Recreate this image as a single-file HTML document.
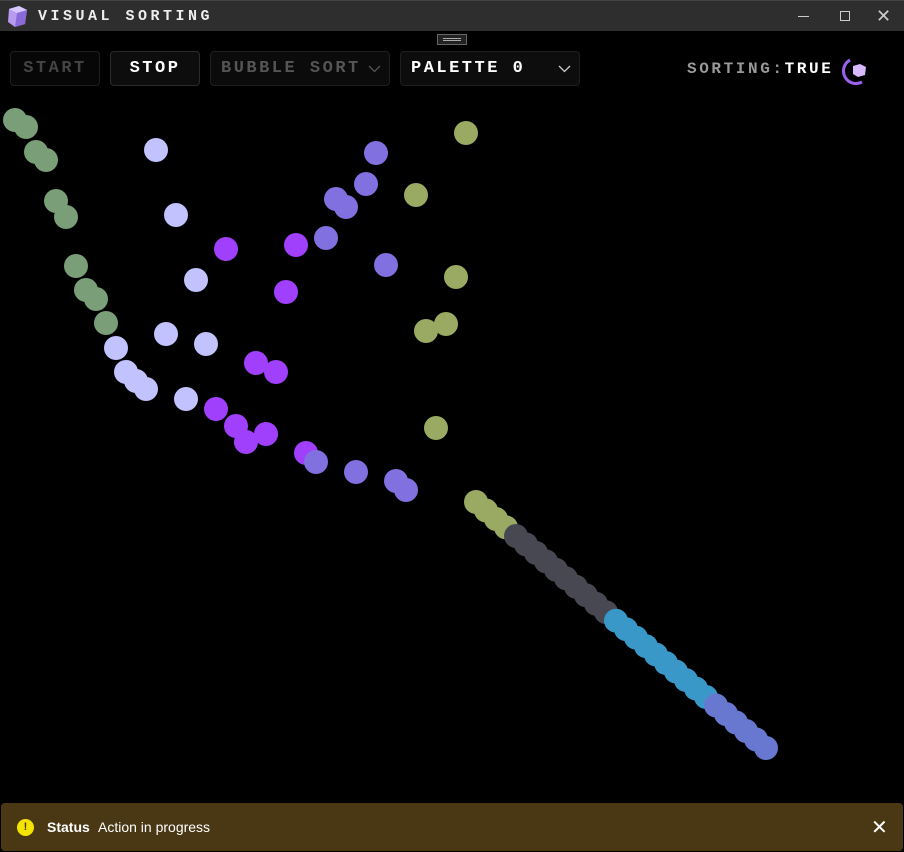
<!DOCTYPE html>
<html><head><meta charset="utf-8"><style>
*{margin:0;padding:0;box-sizing:border-box}
body{width:904px;height:852px;background:#000;overflow:hidden;position:relative;font-family:"Liberation Mono",monospace}
.tb{position:absolute;left:0;top:0;width:904px;height:31px;background:#2e2e2e;border-top:1px solid #444}
.title{position:absolute;left:38px;top:7px;color:#eee;font-weight:bold;font-size:15px;letter-spacing:3.5px}
.btn{position:absolute;top:51px;height:35px;border:1px solid #1e1e1e;border-radius:4px;font-weight:bold;font-size:17px;letter-spacing:2.5px;display:flex;align-items:center;justify-content:center}
.status{position:absolute;left:1px;top:803px;width:902px;height:48px;background:#4a3815;border-radius:4px;font-family:"Liberation Sans",sans-serif;color:#fff;font-size:14px}
</style></head><body>
<div class="tb">
<svg style="position:absolute;left:5px;top:3px" width="24" height="24" viewBox="0 0 24 24"><polygon points="4,5 14,2 22,6 20,20 10,23 3,18" fill="#b89af0"/><polygon points="4,5 14,2 22,6 12,9" fill="#d8c6ff"/><polygon points="12,9 22,6 20,20 10,23" fill="#8a6ad8"/></svg>
<div class="title">VISUAL SORTING</div>
<div style="position:absolute;left:798px;top:15px;width:11px;height:1px;background:#ccc"></div>
<div style="position:absolute;left:840px;top:10px;width:10px;height:10px;border:1px solid #ccc"></div>
<div style="position:absolute;left:876px;top:5px;color:#ccc;font-family:'Liberation Sans';font-size:18px">✕</div>
</div>
<div style="position:absolute;left:437px;top:34px;width:30px;height:11px;border:1px solid #666;background:#222"><div style="margin:3px 5px;height:3px;border-top:1px solid #aaa;border-bottom:1px solid #aaa"></div></div>
<div class="btn" style="left:10px;width:90px;color:#444;background:#070707">START</div>
<div class="btn" style="left:110px;width:90px;color:#fff;background:#0d0d0d;border-color:#2a2a2a">STOP</div>
<div class="btn" style="left:210px;width:180px;color:#555;background:#0b0b0b;justify-content:flex-start;padding-left:10px">BUBBLE SORT<svg style="position:absolute;left:157px;top:13px" width="13" height="8" viewBox="0 0 13 8"><path d="M1 1 L6.5 6.5 L12 1" fill="none" stroke="#555" stroke-width="1.3"/></svg></div>
<div class="btn" style="left:400px;width:180px;color:#fff;background:#0d0d0d;justify-content:flex-start;padding-left:10px">PALETTE 0<svg style="position:absolute;left:157px;top:13px" width="13" height="8" viewBox="0 0 13 8"><path d="M1 1 L6.5 6.5 L12 1" fill="none" stroke="#ccc" stroke-width="1.3"/></svg></div>
<div style="position:absolute;left:687px;top:60px;font-weight:bold;font-size:16px;letter-spacing:2.6px;color:#999">SORTING:<span style="color:#fff">TRUE</span></div>
<svg style="position:absolute;left:840px;top:56px" width="30" height="30" viewBox="0 0 30 30"><path d="M10 4 A11 11 0 0 0 22 26" fill="none" stroke="#9a60f0" stroke-width="3"/><polygon points="13,10 20,8 26,11 25,19 18,21 13,18" fill="#d8b8ff"/></svg>
<svg style="position:absolute;left:0;top:0" width="904" height="852">
<g fill="#7a9e78"><circle cx="15" cy="120" r="12"/><circle cx="26" cy="127" r="12"/><circle cx="36" cy="152" r="12"/><circle cx="46" cy="160" r="12"/><circle cx="56" cy="201" r="12"/><circle cx="66" cy="217" r="12"/><circle cx="76" cy="266" r="12"/><circle cx="86" cy="290" r="12"/><circle cx="96" cy="299" r="12"/><circle cx="106" cy="323" r="12"/></g>
<g fill="#c2c2ff"><circle cx="116" cy="348" r="12"/><circle cx="126" cy="372" r="12"/><circle cx="136" cy="381" r="12"/><circle cx="146" cy="389" r="12"/><circle cx="156" cy="150" r="12"/><circle cx="176" cy="215" r="12"/><circle cx="196" cy="280" r="12"/><circle cx="166" cy="334" r="12"/><circle cx="206" cy="344" r="12"/><circle cx="186" cy="399" r="12"/></g>
<g fill="#a040fc"><circle cx="226" cy="249" r="12"/><circle cx="216" cy="409" r="12"/><circle cx="236" cy="426" r="12"/><circle cx="246" cy="442" r="12"/><circle cx="256" cy="363" r="12"/><circle cx="266" cy="434" r="12"/><circle cx="276" cy="372" r="12"/><circle cx="286" cy="292" r="12"/><circle cx="296" cy="245" r="12"/><circle cx="306" cy="453" r="12"/></g>
<g fill="#8070e0"><circle cx="316" cy="462" r="12"/><circle cx="326" cy="238" r="12"/><circle cx="336" cy="199" r="12"/><circle cx="346" cy="207" r="12"/><circle cx="356" cy="472" r="12"/><circle cx="366" cy="184" r="12"/><circle cx="376" cy="153" r="12"/><circle cx="386" cy="265" r="12"/><circle cx="396" cy="481" r="12"/><circle cx="406" cy="490" r="12"/></g>
<g fill="#9aaa62"><circle cx="416" cy="195" r="12"/><circle cx="426" cy="331" r="12"/><circle cx="436" cy="428" r="12"/><circle cx="446" cy="324" r="12"/><circle cx="456" cy="277" r="12"/><circle cx="466" cy="133" r="12"/><circle cx="476" cy="502" r="12"/><circle cx="486" cy="510.5" r="12"/><circle cx="496" cy="519" r="12"/><circle cx="506" cy="527.4" r="12"/></g>
<g fill="#484852"><circle cx="516" cy="536" r="12"/><circle cx="526" cy="544.4" r="12"/><circle cx="536" cy="552.9" r="12"/><circle cx="546" cy="561.4" r="12"/><circle cx="556" cy="569.8" r="12"/><circle cx="566" cy="578.3" r="12"/><circle cx="576" cy="586.8" r="12"/><circle cx="586" cy="595.3" r="12"/><circle cx="596" cy="603.8" r="12"/><circle cx="606" cy="612.2" r="12"/></g>
<g fill="#3a98c8"><circle cx="616" cy="620.7" r="12"/><circle cx="626" cy="629.2" r="12"/><circle cx="636" cy="637.7" r="12"/><circle cx="646" cy="646.2" r="12"/><circle cx="656" cy="654.6" r="12"/><circle cx="666" cy="663.1" r="12"/><circle cx="676" cy="671.6" r="12"/><circle cx="686" cy="680.1" r="12"/><circle cx="696" cy="688.6" r="12"/><circle cx="706" cy="697" r="12"/></g>
<g fill="#6878d0"><circle cx="716" cy="705.5" r="12"/><circle cx="726" cy="714" r="12"/><circle cx="736" cy="722.5" r="12"/><circle cx="746" cy="731" r="12"/><circle cx="756" cy="739.4" r="12"/><circle cx="766" cy="748" r="12"/></g>
</svg>
<div class="status">
<div style="position:absolute;left:16px;top:16px;width:17px;height:17px;border-radius:50%;background:#f5e400;color:#4a3815;font-size:11px;font-weight:bold;text-align:center;line-height:17px">!</div>
<div style="position:absolute;left:46px;top:16px;font-weight:bold">Status</div>
<div style="position:absolute;left:97px;top:16px">Action in progress</div>
<div style="position:absolute;left:870px;top:12px;font-size:20px">✕</div>
</div>
</body></html>
